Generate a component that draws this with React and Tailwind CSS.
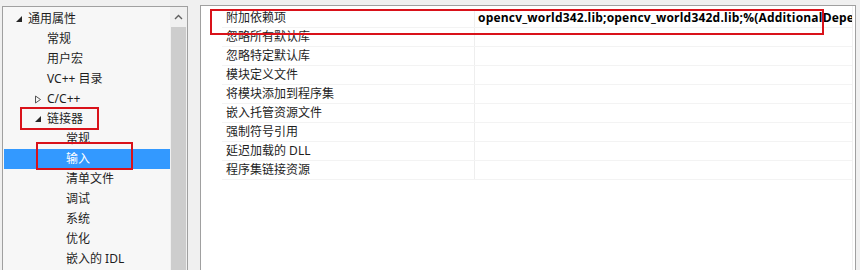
import React from "react";

const treeItems = [
  { label: "通用属性", indent: 0, arrow: "open" },
  { label: "常规", indent: 1 },
  { label: "用户宏", indent: 1 },
  { label: "VC++ 目录", indent: 1 },
  { label: "C/C++", indent: 1, arrow: "closed" },
  { label: "链接器", indent: 1, arrow: "open" },
  { label: "常规", indent: 2 },
  { label: "输入", indent: 2, selected: true },
  { label: "清单文件", indent: 2 },
  { label: "调试", indent: 2 },
  { label: "系统", indent: 2 },
  { label: "优化", indent: 2 },
  { label: "嵌入的 IDL", indent: 2 },
];

const props = [
  "附加依赖项",
  "忽略所有默认库",
  "忽略特定默认库",
  "模块定义文件",
  "将模块添加到程序集",
  "嵌入托管资源文件",
  "强制符号引用",
  "延迟加载的 DLL",
  "程序集链接资源",
];

const font = { fontFamily: '"Noto Sans", "Noto Sans CJK SC", sans-serif' };

function Arrow({ type }) {
  if (type === "open") {
    return (
      <svg width="8" height="8" viewBox="0 0 8 8" className="block">
        <polygon points="7,1 7,7 1,7" fill="#262626" />
      </svg>
    );
  }
  return (
    <svg width="8" height="9" viewBox="0 0 8 9" className="block">
      <polygon points="1.5,1 6.5,4.5 1.5,8" fill="none" stroke="#555" strokeWidth="1" />
    </svg>
  );
}

export default function App() {
  return (
    <div
      className="relative w-[860px] h-[270px] bg-[#f0f0f0] flex overflow-hidden text-[12px] text-[#1e1e1e]"
      style={font}
    >
      {/* left tree panel */}
      <div className="mt-[6px] ml-[2px] w-[186px] h-[264px] border border-b-0 border-[#a0a0a0] bg-[#f7f7f7] flex">
        <div className="w-[167px] pt-[2px]">
          {treeItems.map((it, i) => (
            <div
              key={i}
              className={
                "h-[20px] flex items-center ml-[1px] " +
                (it.selected ? "bg-[#3399ff] text-white" : "")
              }
            >
              <div
                className={
                  "flex items-center " +
                  (it.indent === 0 ? "w-[24px] pl-[11px]" : it.indent === 1 ? "w-[43px] pl-[30px]" : "w-[62px]")
                }
              >
                {it.arrow ? <Arrow type={it.arrow} /> : null}
              </div>
              <span className="leading-[20px] whitespace-nowrap">{it.label}</span>
            </div>
          ))}
        </div>
        <div className="w-[17px] flex flex-col bg-[#f0f0f0]">
          <div className="h-[20px] flex items-center justify-center">
            <svg width="9" height="6" viewBox="0 0 9 6">
              <polyline points="1,5 4.5,1.5 8,5" fill="none" stroke="#606060" strokeWidth="1.4" />
            </svg>
          </div>
          <div className="flex-1 mx-[1px] bg-[#cdcdcd]"></div>
        </div>
      </div>

      {/* right property grid */}
      <div className="mt-[5px] ml-[12px] w-[656px] h-[265px] border border-b-0 border-[#a0a0a0] bg-white flex overflow-hidden">
        <div className="w-[21px] shrink-0"></div>
        <div className="flex-1 pt-[3px] overflow-hidden">
          {props.map((p, i) => (
            <div key={i} className="h-[19px] flex border-b border-[#f3f3f3]">
              <div className="w-[253px] shrink-0 pl-[4px] leading-[18px] whitespace-nowrap border-r border-[#eeeeee]">
                {p}
              </div>
              <div
                className="flex-1 pl-[3px] leading-[18px] whitespace-nowrap overflow-hidden font-bold text-black tracking-[0.2px]"
                style={{ fontFamily: '"Open Sans", "Noto Sans", sans-serif' }}
              >
                {i === 0 ? "opencv_world342.lib;opencv_world342d.lib;%(AdditionalDependencies)" : ""}
              </div>
            </div>
          ))}
        </div>
        <div className="w-[3px] shrink-0 border-l border-[#f0f0f0]"></div>
      </div>

      {/* red annotation boxes */}
      <div className="absolute left-[20px] top-[107px] w-[79px] h-[23px] border-2 border-[#d9121a]"></div>
      <div className="absolute left-[36px] top-[142px] w-[97px] h-[28px] border-2 border-[#d9121a]"></div>
      <div className="absolute left-[210px] top-[9px] w-[614px] h-[26px] border-2 border-[#d9121a]"></div>
    </div>
  );
}
